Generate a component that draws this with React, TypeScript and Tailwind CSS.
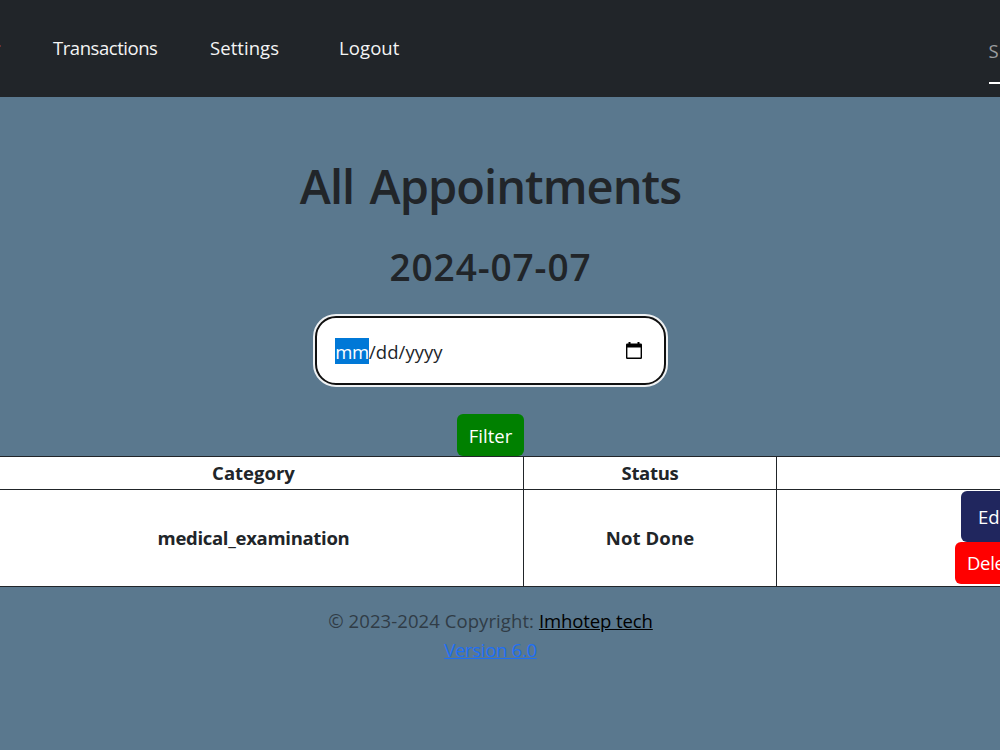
const navItems = [
  { label: 'Transactions', style: 'ml-[53px] w-[157px] tracking-[-0.45px]' },
  { label: 'Settings', style: 'w-[129px] tracking-[0.05px]' },
  { label: 'Logout', style: 'w-[120px] tracking-[0.1px]' },
];

function Navbar() {
  return (
    <header className="flex h-[97px] items-start overflow-hidden bg-[#212529] text-[18.5px] leading-[29px] text-[#f4f4f4]">
      <span className="-mr-px mt-[45px] h-[2px] w-px bg-[#6b3030]" />
      <nav className="flex pt-[33px]">
        {navItems.map((item) => (
          <a key={item.label} href="#" className={`shrink-0 whitespace-nowrap ${item.style}`}>
            {item.label}
          </a>
        ))}
      </nav>
      <div className="-mr-[200px] ml-auto mt-[36px] h-[48px] w-[211.5px] shrink-0 border-b-2 border-white text-[#9a9da0] tracking-[0.8px]">
        Search
      </div>
    </header>
  );
}

function CalendarIcon() {
  return (
    <svg width="16" height="17" viewBox="0 0 16 17" fill="none" className="shrink-0">
      <path d="M2.500 0h2v1.500h7V0h2v1.500h1.300A1.200 1.200 0 0 1 16 2.700V15.800A1.200 1.200 0 0 1 14.800 17H1.200A1.200 1.200 0 0 1 0 15.800V2.700A1.200 1.200 0 0 1 1.200 1.500H2.500V0ZM1.400 5.500V15.600H14.600V5.500H1.400Z" fill="#000" fillRule="evenodd" />
    </svg>
  );
}

function DateField() {
  return (
    <div className="mt-[24px] flex h-[73px] w-[355px] items-center justify-center rounded-[23px] border-2 border-[#eef1f3] bg-white">
      <div className="flex h-[69px] w-[351px] shrink-0 items-center rounded-[21px] border-2 border-[#101010] bg-white pl-[18px] pr-[22px] text-[18.5px] text-[#212529]">
        <span className="h-[26px] w-[34px] bg-[#0078d7] text-center leading-[28px] tracking-[-0.5px] text-white">mm</span>
        <span className="pt-[2px] leading-[28px] tracking-[0.05px]">/dd/yyyy</span>
        <span className="ml-auto">
          <CalendarIcon />
        </span>
      </div>
    </div>
  );
}

function AppointmentsTable() {
  return (
    <div className="grid h-[131px] w-full grid-cols-[524px_253px_223px] grid-rows-[33px_97px] overflow-hidden border-t border-[#212529] bg-white text-[18.5px] font-bold text-[#212529]">
      <div className="flex items-center justify-center border-b border-r border-[#212529] pr-[16px]">
        <span>Category</span>
      </div>
      <div className="flex items-center justify-center border-b border-r border-[#212529]">
        <span className="tracking-[-0.3px]">Status</span>
      </div>
      <div className="border-b border-[#212529]" />
      <div className="flex items-center justify-center border-b border-r border-[#212529] pr-[16px]">
        <span className="tracking-[-0.3px]">medical_examination</span>
      </div>
      <div className="flex items-center justify-center border-b border-r border-[#212529]">
        <span className="tracking-[0.1px]">Not Done</span>
      </div>
      <div className="flex flex-col items-start overflow-hidden border-b border-[#212529] font-normal text-white">
        <button className="ml-[183.5px] mt-[0.5px] h-[51px] w-[70px] shrink-0 rounded-[6px] bg-[#20265e] pl-[17.5px] pt-px text-left">Edit</button>
        <button className="ml-[177.5px] h-[42.5px] w-[82px] shrink-0 rounded-[6px] bg-[#ff0000] pl-[12.5px] text-left tracking-[-0.3px]">Delete</button>
      </div>
    </div>
  );
}

export default function App() {
  return (
    <div className="flex h-[750px] w-[1000px] flex-col overflow-hidden bg-[#5a788e] font-['Open_Sans',sans-serif]">
      <Navbar />
      <main className="flex flex-col">
        <section className="flex w-[981px] flex-col items-center">
          <h1 className="mt-[60px] whitespace-nowrap text-[47px] font-[560] leading-[58px] tracking-[-0.95px] [word-spacing:4px] text-[#212529]">All Appointments</h1>
          <h2 className="mt-[29px] whitespace-nowrap text-[37px] font-[560] leading-[46px] tracking-[0.9px] text-[#212529]">2024-07-07</h2>
          <DateField />
          <button className="mt-[27px] h-[42px] w-[67px] rounded-[6px] bg-[#008000] pt-px text-[18.5px] text-white">Filter</button>
        </section>
        <AppointmentsTable />
      </main>
      <footer className="flex w-[981px] flex-col items-center pt-[19px] text-[18.5px] leading-[29px] text-[#303c46]">
        <p className="whitespace-nowrap">
          <span className="tracking-[0.08px]">© 2023-2024 Copyright: </span>
          <a href="#" className="tracking-[-0.1px] text-black underline">Imhotep tech</a>
        </p>
        <a href="#" className="tracking-[-0.3px] text-[#1f6ff5] underline">Version 6.0</a>
      </footer>
    </div>
  );
}
